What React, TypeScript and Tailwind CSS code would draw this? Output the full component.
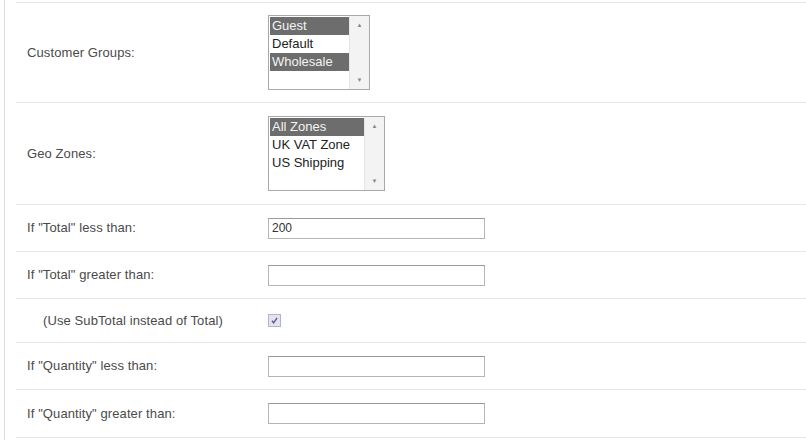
import React from "react";

type ListOption = { label: string; selected?: boolean };

const font = { fontFamily: '"Liberation Sans", Arial, sans-serif' };

function ListBox({ options, width }: { options: ListOption[]; width: string }) {
  return (
    <div className={`flex h-[75px] border border-[#a9a9a9] bg-white ${width}`}>
      <div className="flex-1 pt-[1px] pl-[1px]">
        {options.map((o) => (
          <div
            key={o.label}
            className={`h-[18px] pl-[2px] text-[13px] leading-[18px] ${
              o.selected ? "bg-[#6d6d6d] text-[#f4f4f4]" : "text-[#222]"
            }`}
          >
            {o.label}
          </div>
        ))}
      </div>
      <div className="flex w-[20px] flex-col items-center justify-between border-l border-[#e6e6e6] bg-[#f3f3f3] py-[6px] text-[6px] leading-none text-[#888]">
        <span>▲</span>
        <span>▼</span>
      </div>
    </div>
  );
}

function TextBox({ value = "" }: { value?: string }) {
  return (
    <div className="h-[21px] w-[217px] border border-[#b5b5b5] border-t-[#9a9a9a] bg-white pl-[3px] text-[12px] leading-[19px] text-[#333]">
      {value}
    </div>
  );
}

function Row({
  label,
  height,
  indent,
  children,
}: {
  label: string;
  height: string;
  indent?: boolean;
  children: React.ReactNode;
}) {
  return (
    <div className={`flex items-center border-b border-[#e6e6e6] ${height}`}>
      <div
        className={`w-[239px] text-[13px] tracking-[0.1px] text-[#4a4a4a] ${indent ? "pl-[27px]" : "pl-[11px]"}`}
      >
        {label}
      </div>
      <div className="flex-1 pl-[13px]">{children}</div>
    </div>
  );
}

export default function App() {
  return (
    <div className="h-[440px] w-[806px] overflow-hidden bg-white pl-[4px]" style={font}>
      <div className="h-full border-l border-[#dcdcdc] pl-[11px] pt-[2px]">
        <div className="border-t border-[#e6e6e6]">
          <Row label="Customer Groups:" height="h-[100px]">
            <ListBox
              width="w-[102px]"
              options={[
                { label: "Guest", selected: true },
                { label: "Default" },
                { label: "Wholesale", selected: true },
              ]}
            />
          </Row>
          <Row label="Geo Zones:" height="h-[102px]">
            <ListBox
              width="w-[117px]"
              options={[
                { label: "All Zones", selected: true },
                { label: "UK VAT Zone" },
                { label: "US Shipping" },
              ]}
            />
          </Row>
          <Row label='If "Total" less than:' height="h-[47px]">
            <TextBox value="200" />
          </Row>
          <Row label='If "Total" greater than:' height="h-[47px]">
            <TextBox />
          </Row>
          <Row label="(Use SubTotal instead of Total)" height="h-[44px]" indent>
            <div className="flex h-[13px] w-[13px] items-center justify-center border border-[#b4b4c8] bg-[#e2e3ef]">
              <svg width="9" height="9" viewBox="0 0 9 9">
                <path d="M2 4.8 L3.6 6.8 L7 2" fill="none" stroke="#5a5f88" strokeWidth="1.4" />
              </svg>
            </div>
          </Row>
          <Row label='If "Quantity" less than:' height="h-[47px]">
            <TextBox />
          </Row>
          <Row label='If "Quantity" greater than:' height="h-[48px]">
            <TextBox />
          </Row>
        </div>
      </div>
    </div>
  );
}
